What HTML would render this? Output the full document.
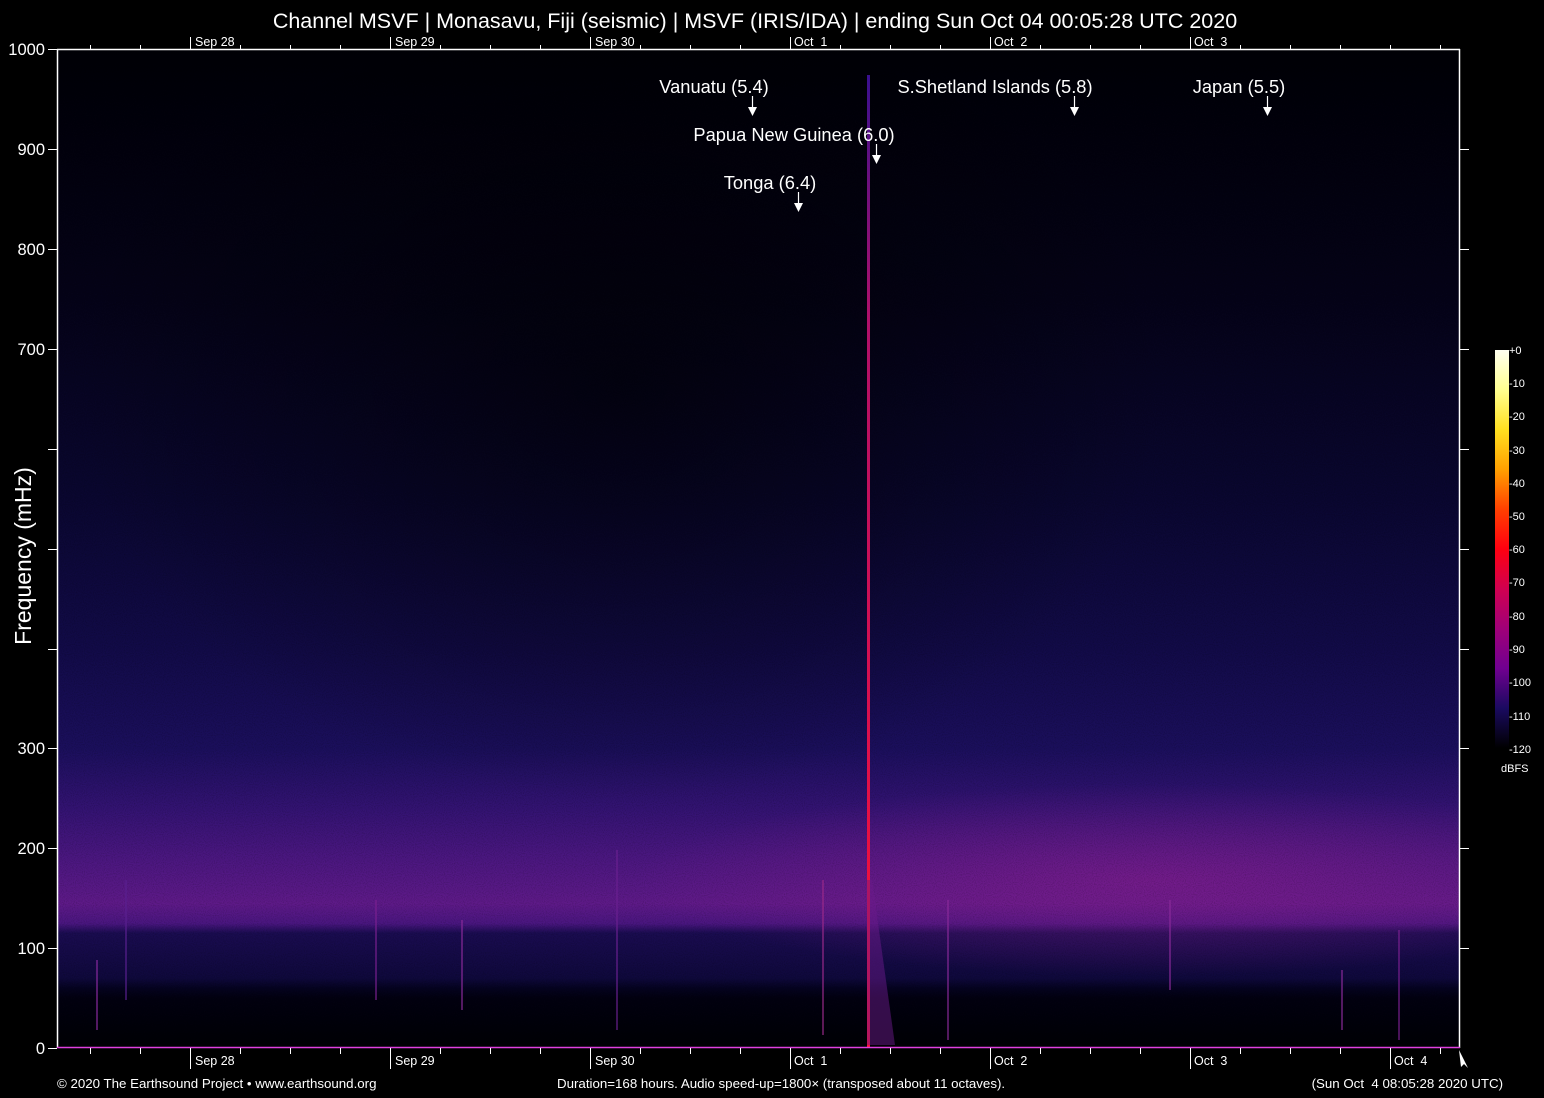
<!DOCTYPE html>
<html><head><meta charset="utf-8"><style>
html,body{margin:0;padding:0;background:#000;width:1544px;height:1098px;overflow:hidden}
svg{display:block}
text{font-family:"Liberation Sans",Arial,sans-serif;fill:#fff;white-space:pre}
</style></head><body>
<svg width="1544" height="1098" viewBox="0 0 1544 1098" xmlns="http://www.w3.org/2000/svg">
<defs>
<linearGradient id="v" x1="0" y1="50" x2="0" y2="1048" gradientUnits="userSpaceOnUse">
<stop offset="0" stop-color="#000006"/>
<stop offset="0.25" stop-color="#050318"/>
<stop offset="0.45" stop-color="#0a0730"/>
<stop offset="0.6" stop-color="#120b48"/>
<stop offset="0.7" stop-color="#1b0f5c"/>
<stop offset="0.76" stop-color="#331372"/>
<stop offset="0.81" stop-color="#4b1780"/>
<stop offset="0.855" stop-color="#5e1a88"/>
<stop offset="0.875" stop-color="#4a1680"/>
<stop offset="0.885" stop-color="#1a0c50"/>
<stop offset="0.93" stop-color="#0f093c"/>
<stop offset="0.94" stop-color="#050320"/>
<stop offset="0.95" stop-color="#020110"/>
<stop offset="1" stop-color="#000004"/>
</linearGradient>
<radialGradient id="dark" cx="620" cy="380" r="420" gradientUnits="userSpaceOnUse" gradientTransform="translate(620 380) scale(1.3 1) translate(-620 -380)">
<stop offset="0" stop-color="#000" stop-opacity="0.55"/>
<stop offset="1" stop-color="#000" stop-opacity="0"/>
</radialGradient>
<radialGradient id="band" cx="1150" cy="880" r="320" gradientUnits="userSpaceOnUse" gradientTransform="translate(1150 880) scale(1.6 0.3) translate(-1150 -880)">
<stop offset="0" stop-color="#8a1e8e" stop-opacity="0.55"/>
<stop offset="1" stop-color="#8a1e8e" stop-opacity="0"/>
</radialGradient>
<linearGradient id="red" x1="0" y1="75" x2="0" y2="1048" gradientUnits="userSpaceOnUse">
<stop offset="0" stop-color="#3a1090"/>
<stop offset="0.25" stop-color="#b0106a"/>
<stop offset="0.7" stop-color="#e0104a"/>
<stop offset="1" stop-color="#ff1030"/>
</linearGradient>
<linearGradient id="cb" x1="0" y1="350" x2="0" y2="748" gradientUnits="userSpaceOnUse">
<stop offset="0" stop-color="#fffff0"/>
<stop offset="0.1" stop-color="#ffff90"/>
<stop offset="0.2" stop-color="#ffe020"/>
<stop offset="0.3" stop-color="#ffa000"/>
<stop offset="0.4" stop-color="#ff4000"/>
<stop offset="0.5" stop-color="#ff0010"/>
<stop offset="0.6" stop-color="#d00050"/>
<stop offset="0.7" stop-color="#a00078"/>
<stop offset="0.8" stop-color="#700090"/>
<stop offset="0.9" stop-color="#1a0a60"/>
<stop offset="1" stop-color="#000"/>
</linearGradient>
<filter id="noise" x="0" y="0" width="100%" height="100%">
<feTurbulence type="fractalNoise" baseFrequency="0.9" numOctaves="1" seed="3"/>
<feColorMatrix values="0 0 0 0 0  0 0 0 0 0  0 0 0 0 0  0 0 0 -1.2 0.7"/>
</filter>
</defs>
<rect x="58" y="50" width="1401" height="998" fill="url(#v)"/>
<rect x="58" y="50" width="1401" height="998" fill="url(#dark)"/>
<rect x="58" y="50" width="1401" height="998" fill="url(#band)"/>
<rect x="58" y="50" width="1401" height="998" filter="url(#noise)" opacity="0.35"/>
<g stroke-width="2" opacity="0.6">
<line x1="97" y1="960" x2="97" y2="1030" stroke="#8a2aa0"/>
<line x1="126" y1="880" x2="126" y2="1000" stroke="#5a2090"/>
<line x1="376" y1="900" x2="376" y2="1000" stroke="#7a2090"/>
<line x1="462" y1="920" x2="462" y2="1010" stroke="#8a2a9a"/>
<line x1="617" y1="850" x2="617" y2="1030" stroke="#6a2090"/>
<line x1="823" y1="880" x2="823" y2="1035" stroke="#9a2a8a"/>
<line x1="948" y1="900" x2="948" y2="1040" stroke="#8a2a9a"/>
<line x1="1170" y1="900" x2="1170" y2="990" stroke="#8a2a9a"/>
<line x1="1342" y1="970" x2="1342" y2="1030" stroke="#8a2a9a"/>
<line x1="1399" y1="930" x2="1399" y2="1040" stroke="#7a2090"/>
</g>
<rect x="867" y="75" width="3" height="973" fill="url(#red)"/>
<polygon points="867,880 872,880 895,1045 867,1045" fill="#6a1a8a" opacity="0.5"/>
<g stroke="#fff" stroke-width="1.5" fill="none">
<line x1="57.5" y1="49" x2="57.5" y2="1048"/>
<line x1="57" y1="49.5" x2="1460" y2="49.5"/>
<line x1="1459.5" y1="49" x2="1459.5" y2="1048"/>
</g>
<line x1="57" y1="1047.5" x2="1460" y2="1047.5" stroke="#e040e0" stroke-width="1.5"/>
<g stroke="#fff" stroke-width="1">
<path d="M48 49.5H57M48 149.5H57M48 249.5H57M48 349.5H57M48 449.5H57M48 549.5H57M48 649.5H57M48 748.5H57M48 848.5H57M48 948.5H57M48 1048.5H57"/>
<path d="M1459 149.5H1469M1459 249.5H1469M1459 349.5H1469M1459 449.5H1469M1459 549.5H1469M1459 649.5H1469M1459 748.5H1469M1459 848.5H1469M1459 948.5H1469"/>
<path d="M90.5 45V49M140.5 45V49M240.5 45V49M290.5 45V49M340.5 45V49M440.5 45V49M490.5 45V49M540.5 45V49M640.5 45V49M690.5 45V49M740.5 45V49M840.5 45V49M890.5 45V49M940.5 45V49M1040.5 45V49M1090.5 45V49M1140.5 45V49M1240.5 45V49M1290.5 45V49M1340.5 45V49M1390.5 45V49M1440.5 45V49"/>
<path d="M190.5 37V49M390.5 37V49M590.5 37V49M790.5 37V49M990.5 37V49M1190.5 37V49"/>
<path d="M90.5 1048V1054M140.5 1048V1054M240.5 1048V1054M290.5 1048V1054M340.5 1048V1054M440.5 1048V1054M490.5 1048V1054M540.5 1048V1054M640.5 1048V1054M690.5 1048V1054M740.5 1048V1054M840.5 1048V1054M890.5 1048V1054M940.5 1048V1054M1040.5 1048V1054M1090.5 1048V1054M1140.5 1048V1054M1240.5 1048V1054M1290.5 1048V1054M1340.5 1048V1054M1440.5 1048V1054"/>
<path d="M190.5 1048V1069M390.5 1048V1069M590.5 1048V1069M790.5 1048V1069M990.5 1048V1069M1190.5 1048V1069M1390.5 1048V1069"/>
</g>
<path d="M1459 1050L1468 1068L1464 1064L1461 1067Z" fill="#fff"/>
<text x="755" y="28" font-size="21.5" text-anchor="middle">Channel MSVF | Monasavu, Fiji (seismic) | MSVF (IRIS/IDA) | ending Sun Oct 04 00:05:28 UTC 2020</text>
<g font-size="12.5">
<text x="195" y="46">Sep 28</text><text x="395" y="46">Sep 29</text><text x="595" y="46">Sep 30</text><text x="794" y="46">Oct  1</text><text x="994" y="46">Oct  2</text><text x="1194" y="46">Oct  3</text>
<text x="195" y="1065">Sep 28</text><text x="395" y="1065">Sep 29</text><text x="595" y="1065">Sep 30</text><text x="794" y="1065">Oct  1</text><text x="994" y="1065">Oct  2</text><text x="1194" y="1065">Oct  3</text><text x="1394" y="1065">Oct  4</text>
</g>
<g font-size="16.5" text-anchor="end">
<text x="45" y="55">1000</text><text x="45" y="155">900</text><text x="45" y="255">800</text><text x="45" y="355">700</text>
<text x="45" y="754">300</text><text x="45" y="854">200</text><text x="45" y="954">100</text><text x="45" y="1054">0</text>
</g>
<text transform="translate(31 556) rotate(-90)" font-size="23" text-anchor="middle">Frequency (mHz)</text>
<g font-size="18.3" text-anchor="middle">
<text x="714" y="93">Vanuatu (5.4)</text>
<text x="794" y="141">Papua New Guinea (6.0)</text>
<text x="770" y="189">Tonga (6.4)</text>
<text x="995" y="93">S.Shetland Islands (5.8)</text>
<text x="1239" y="93">Japan (5.5)</text>
</g>
<g stroke="#fff" stroke-width="1.2">
<line x1="752.5" y1="96" x2="752.5" y2="108"/><line x1="876.5" y1="144" x2="876.5" y2="156"/><line x1="798.5" y1="192" x2="798.5" y2="204"/><line x1="1074.5" y1="96" x2="1074.5" y2="108"/><line x1="1267.5" y1="96" x2="1267.5" y2="108"/>
</g>
<g fill="#fff">
<polygon points="748,107 757,107 752.5,116"/><polygon points="872,155 881,155 876.5,164"/><polygon points="794,203 803,203 798.5,212"/><polygon points="1070,107 1079,107 1074.5,116"/><polygon points="1263,107 1272,107 1267.5,116"/>
</g>
<rect x="1495" y="350" width="14" height="398" fill="url(#cb)"/>
<g font-size="11">
<text x="1509" y="354">+0</text><text x="1509" y="387">-10</text><text x="1509" y="420">-20</text><text x="1509" y="454">-30</text><text x="1509" y="487">-40</text><text x="1509" y="520">-50</text><text x="1509" y="553">-60</text><text x="1509" y="586">-70</text><text x="1509" y="620">-80</text><text x="1509" y="653">-90</text><text x="1509" y="686">-100</text><text x="1509" y="720">-110</text><text x="1509" y="753">-120</text>
<text x="1501" y="772">dBFS</text>
</g>
<g font-size="13.3">
<text x="57" y="1088">© 2020 The Earthsound Project • www.earthsound.org</text>
<text x="557" y="1088">Duration=168 hours. Audio speed-up=1800× (transposed about 11 octaves).</text>
<text x="1503" y="1088" text-anchor="end">(Sun Oct  4 08:05:28 2020 UTC)</text>
</g>
</svg>
</body></html>
